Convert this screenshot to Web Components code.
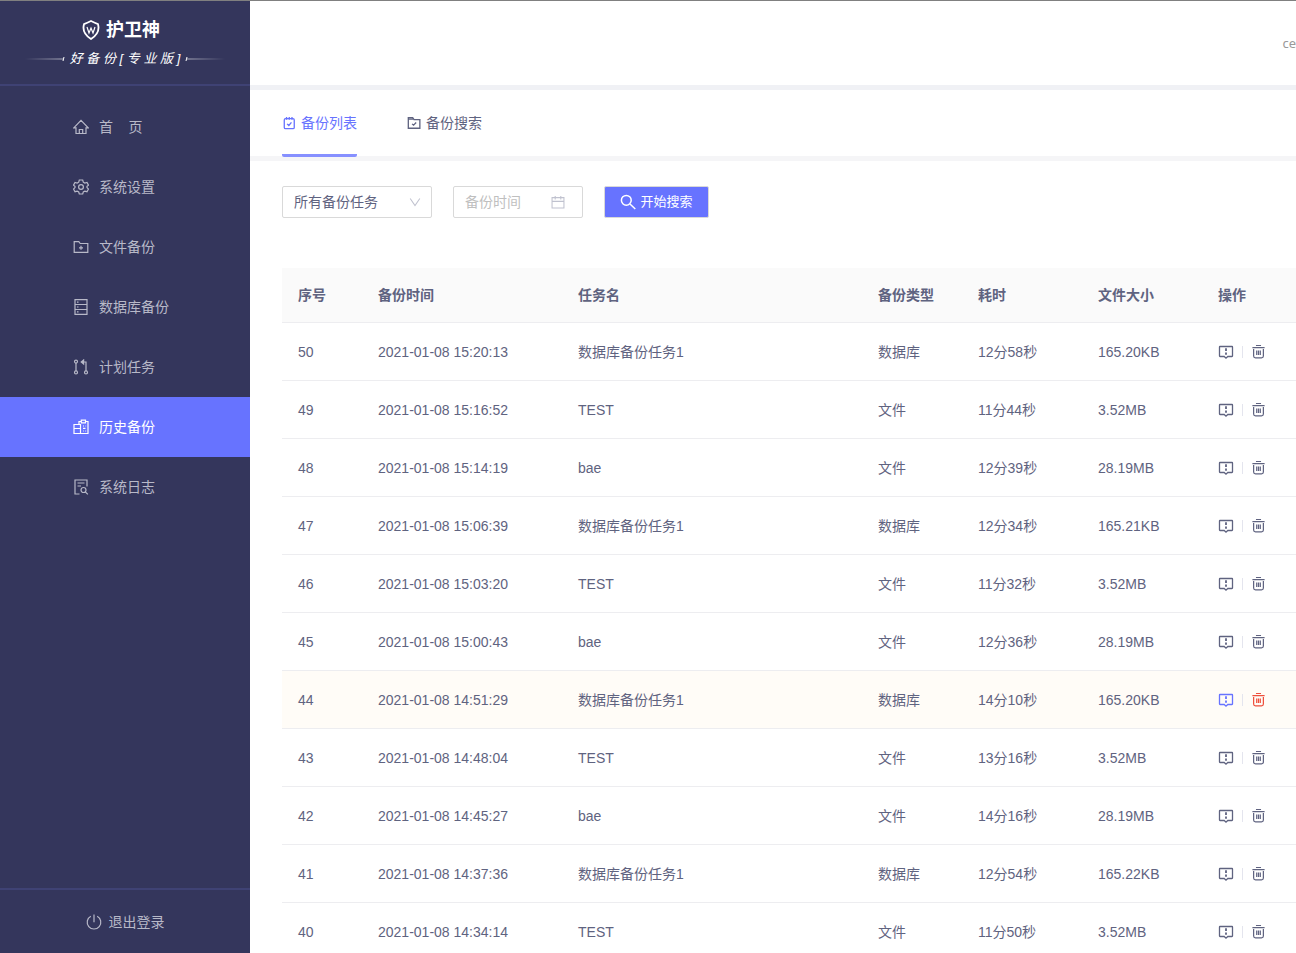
<!DOCTYPE html>
<html lang="zh-CN">
<head>
<meta charset="utf-8">
<title>护卫神·好备份</title>
<style>
  html, body { height: 100%; margin: 0; }
  body { font: 14px/20px "Liberation Sans", "Noto Sans CJK SC", sans-serif; color: #5f6380; background: #fff; overflow: hidden; }
</style>
</head>
<body>
<backup-app></backup-app>

<script>
const ICONS = {
  home: '<path d="M.8 8.800 8 1.400l7.200 7.400H13v5.700H3V8.800zM6.300 14.500v-4h3.400v4"/>',
  gear: '<path d="M6.300 1h3.400l.6 2.200 1.500.9 2.200-.6 1.500 2.700L14 7.400v1.200l1.500 1.400-1.500 2.700-2.200-.6-1.500.9-.6 2H6.300l-.6-2-1.500-.9-2.200.6L.5 10 2 8.600V7.400L.5 6.200 2 3.500l2.200.6 1.500-.9z"/><circle cx="8" cy="8" r="2.400"/>',
  folderPlus: '<path d="M1.200 2.700h4.600L7.200 4.500h7.600v8.800H1.200zM8 6.800v4M6 8.800h4"/>',
  database: '<path d="M2 .7h12v14.600H2zM2 5.500h12M2 10.500h12M4 3.100h1.500M4 8h1.500M4 12.900h1.500"/>',
  plan: '<circle cx="3" cy="2.600" r="1.500"/><circle cx="3" cy="13.400" r="1.500"/><circle cx="13" cy="13.400" r="1.500"/><path d="M3 4.100v7.800M13 11.900V3H8.800M10.600 1v4L8.200 3z"/>',
  history: '<path d="M6 5V2.500h2.300M12.500 2.500H15v12H1V5.500h6.500v9M1 9.500h6.500M8.300 1.200h4.200v2.600H8.300zM10 7h1M12.500 7h.6M10 9.300h2.500M10 12h.8M12.300 12h.8"/>',
  log: '<path d="M6.500 15H2V1h12v6.500M4.500 4h7M4.500 7h3.500"/><circle cx="10.500" cy="11" r="2.500"/><path d="m12.300 12.900 2.500 2.500"/>',
  power: '<path d="M4.800 2.200a6.800 6.800 0 1 0 6.400 0M8 .6v7.600"/>',
  listCheck: '<rect x="2.600" y="3" width="11.400" height="11.500" rx="1.500"/><path d="M5.200 1.200v3.200M8.300 1.200v3.200M11.400 1.200v3.200M5.800 9l2 1.800 3-3.600"/>',
  folderCheck: '<path d="M1.500 1.800h5L8 4.200h6.700V14H1.500zM1.500 3.500H7M5.800 9l1.700 1.500 3-3"/>',
  chevron: '<path d="m2.500 4 5.500 8 5.500-8"/>',
  calendar: '<path d="M1.200 3h13.600v11.800H1.200zM1.200 7.300h13.600M4.800 1v4M11.200 1v4"/>',
  search: '<circle cx="6.300" cy="6.300" r="4.900"/><path d="m10 10 5.300 5"/>',
  note: '<path d="M2 2.500h12q.5 0 .5.500v9q0 .5-.5.500H9.800L8 14.200 6.200 12.500H2q-.5 0-.5-.500V3q0-.5.500-.500z"/><path stroke-width="1.800" d="M8 4.300v2.600M8 8.500v2.200"/>',
  trash: '<path d="M1.500 3.800h13M5.300 1.600h5.400M2.800 5.200v7.600q0 2 2 2h6.400q2 0 2-2V5.200M6.100 7v4.800M8 7v4.800M9.900 7v4.800"/>'
};

function define(name, html, setup) {
  const template = document.createElement('template');
  template.innerHTML = html;
  customElements.define(name, class extends HTMLElement {
    constructor() {
      super();
      this.attachShadow({ mode: 'open' }).append(template.content.cloneNode(true));
    }
    connectedCallback() { if (setup) setup(this, this.shadowRoot); }
  });
}

define('ui-icon', `
<style>
  :host { display: block; flex: none; width: 16px; height: 16px; }
  svg { display: block; width: 100%; height: 100%; fill: none; stroke: currentColor; stroke-width: var(--stroke, 1.2); }
</style>
<svg viewBox="0 0 16 16" aria-hidden="true"></svg>`,
(el, root) => { root.querySelector('svg').innerHTML = ICONS[el.getAttribute('name')] || ''; });

define('brand-logo', `
<style>
  :host { display: flex; flex-direction: column; align-items: center; box-sizing: border-box; height: 85px; padding: 16px 8px 0 0; color: #fff; border-bottom: 2px solid #3f4274; }
  .name { display: flex; align-items: center; gap: 6px; font-size: 18px; line-height: 26px; font-weight: 700; }
  .name svg { width: 18px; height: 20px; }
  .edition { display: flex; align-items: center; gap: 5px; margin-top: 6px; padding-left: 8px; font-size: 13px; line-height: 20px; font-style: italic; white-space: nowrap; }
  .edition svg { width: 40px; height: 8px; }
</style>
<div class="name">
  <svg viewBox="0 0 18 20" fill="none" stroke="#fff" aria-hidden="true"><path stroke-width="1.800" d="M9 1Q13 3 16 4.200 18.500 13 9 19-.5 13 2 4.200 5 3 9 1z"/><path stroke-width="1.200" d="m5 7 2 6 2-5 2 5 2-6"/></svg>
  <span>护卫神</span>
</div>
<div class="edition">
  <svg viewBox="0 0 40 8" aria-hidden="true"><defs><linearGradient id="l"><stop stop-color="#fff" stop-opacity="0"/><stop offset="1" stop-color="#fff" stop-opacity=".6"/></linearGradient></defs><path fill="url(#l)" d="M0 3.500h38v1H0z"/><path stroke="#fff" d="m39 2-1 4"/></svg>
  <span>好 备 份 [ 专 业 版 ]</span>
  <svg viewBox="0 0 40 8" aria-hidden="true"><defs><linearGradient id="r"><stop stop-color="#fff" stop-opacity=".6"/><stop offset="1" stop-color="#fff" stop-opacity="0"/></linearGradient></defs><path fill="url(#r)" d="M2 3.500h38v1H2z"/><path stroke="#fff" d="m2 2-1 4"/></svg>
</div>`);

define('nav-item', `
<style>
  :host { display: block; color: #b8b9c8; }
  :host([active]) { color: #fff; background: #6773ff; }
  a { display: flex; align-items: center; gap: 10px; height: 60px; padding-left: 73px; color: inherit; text-decoration: none; }
</style>
<a href="#"><span><slot></slot></span></a>`,
(el, root) => {
  const link = root.querySelector('a');
  const icon = document.createElement('ui-icon');
  icon.setAttribute('name', el.getAttribute('icon'));
  link.prepend(icon);
  if (el.hasAttribute('active')) link.setAttribute('aria-current', 'page');
});

define('side-bar', `
<style>
  :host { display: flex; flex-direction: column; background: #34365c; }
  nav { flex: 1; padding-top: 11px; }
  footer { border-top: 2px solid #3f4274; }
  footer a { display: flex; align-items: center; justify-content: center; gap: 7px; height: 63px; color: #b8b9c8; text-decoration: none; }
</style>
<brand-logo></brand-logo>
<nav>
  <nav-item icon="home">首&nbsp;&nbsp;&nbsp;&nbsp;页</nav-item>
  <nav-item icon="gear">系统设置</nav-item>
  <nav-item icon="folderPlus">文件备份</nav-item>
  <nav-item icon="database">数据库备份</nav-item>
  <nav-item icon="plan">计划任务</nav-item>
  <nav-item icon="history" active>历史备份</nav-item>
  <nav-item icon="log">系统日志</nav-item>
</nav>
<footer><a href="#"><ui-icon name="power"></ui-icon><span>退出登录</span></a></footer>`);

define('top-bar', `
<style>
  :host { display: flex; align-items: center; justify-content: flex-end; height: 84px; border-bottom: 5px solid #f0f1f5; }
  span { font-family: "Noto Sans", sans-serif; font-size: 13px; color: #999; white-space: nowrap; }
</style>
<span>ce</span>`);

define('tab-bar', `
<style>
  :host { display: flex; gap: 50px; height: 66px; padding-left: 32px; border-bottom: 5px solid #f5f5f7; }
  button { display: flex; align-items: center; gap: 5px; box-sizing: border-box; height: 67px; padding: 2px 0 0; font: inherit; color: inherit; background: none; border: 0; border-bottom: 3px solid transparent; border-radius: 2px; }
  button[aria-selected=true] { color: #6773ff; border-bottom-color: #8690ff; }
  ui-icon { width: 14px; height: 14px; --stroke: 1.5; }
</style>
<button role="tab" aria-selected="true"><ui-icon name="listCheck"></ui-icon>备份列表</button>
<button role="tab" aria-selected="false"><ui-icon name="folderCheck"></ui-icon>备份搜索</button>`);

define('filter-bar', `
<style>
  :host { display: flex; gap: 21px; padding: 25px 32px 50px; }
  .field { display: grid; grid-template-columns: 1fr auto; align-items: center; box-sizing: border-box; height: 32px; padding-right: 9px; border: 1px solid #d9d9d9; border-radius: 2px; color: #c0c2cf; }
  .task { width: 150px; }
  .date { width: 130px; padding-right: 17px; }
  select, input { grid-area: 1 / 1; width: 100%; min-width: 0; height: 30px; box-sizing: border-box; padding: 0 0 0 11px; border: 0; outline: 0; background: none; appearance: none; font: inherit; color: #5f6380; }
  .task select { grid-column: 1 / 3; }
  .field ui-icon { grid-area: 1 / 2; width: 14px; height: 14px; pointer-events: none; }
  input::placeholder { color: #bfbfbf; opacity: 1; }
  button { display: flex; align-items: center; justify-content: center; gap: 4px; box-sizing: border-box; width: 105px; height: 32px; padding: 0; border: 1px solid #d9d9d9; border-radius: 2px; background: #6773ff; color: #fff; font: inherit; font-size: 13px; }
  button ui-icon { --stroke: 1.5; }
</style>
<div class="field task"><select aria-label="备份任务"><option>所有备份任务</option></select><ui-icon name="chevron"></ui-icon></div>
<div class="field date"><input aria-label="备份时间" placeholder="备份时间"><ui-icon name="calendar"></ui-icon></div>
<button><ui-icon name="search"></ui-icon>开始搜索</button>`);

define('row-actions', `
<style>
  :host { display: flex; align-items: center; gap: 8px; }
  button { padding: 0; border: 0; background: none; color: inherit; }
  ui-icon { width: 16px; height: 16px; --stroke: 1.3; }
  i { width: 1px; height: 12px; background: #e4e5ee; }
  ui-icon[name=trash] { width: 15px; height: 15px; }
  :host([highlight]) .info { color: #6773ff; }
  :host([highlight]) .delete { color: #ee4f3c; }
</style>
<button class="info" aria-label="详情"><ui-icon name="note"></ui-icon></button><i></i><button class="delete" aria-label="删除"><ui-icon name="trash"></ui-icon></button>`);

const RECORDS = [
  [50, '15:20:13', 'db', '12分58秒', '165.20KB'],
  [49, '15:16:52', 'TEST', '11分44秒', '3.52MB'],
  [48, '15:14:19', 'bae', '12分39秒', '28.19MB'],
  [47, '15:06:39', 'db', '12分34秒', '165.21KB'],
  [46, '15:03:20', 'TEST', '11分32秒', '3.52MB'],
  [45, '15:00:43', 'bae', '12分36秒', '28.19MB'],
  [44, '14:51:29', 'db', '14分10秒', '165.20KB'],
  [43, '14:48:04', 'TEST', '13分16秒', '3.52MB'],
  [42, '14:45:27', 'bae', '14分16秒', '28.19MB'],
  [41, '14:37:36', 'db', '12分54秒', '165.22KB'],
  [40, '14:34:14', 'TEST', '11分50秒', '3.52MB']
];

define('backup-table', `
<style>
  :host { display: block; padding-left: 32px; }
  table { width: 100%; min-width: 1060px; table-layout: fixed; border-collapse: separate; border-spacing: 0; }
  th, td { box-sizing: border-box; padding: 0 16px; text-align: left; border-bottom: 1px solid #ededf0; white-space: nowrap; }
  th { height: 55px; font-weight: 700; background: #fafafa; }
  td { height: 58px; }
  tr.hover td { background: #fffcf7; }
</style>
<table>
  <colgroup><col style="width:80px"><col style="width:200px"><col style="width:300px"><col style="width:100px"><col style="width:120px"><col style="width:120px"><col></colgroup>
  <thead><tr><th>序号</th><th>备份时间</th><th>任务名</th><th>备份类型</th><th>耗时</th><th>文件大小</th><th>操作</th></tr></thead>
  <tbody></tbody>
</table>`,
(el, root) => {
  root.querySelector('tbody').innerHTML = RECORDS.map(([id, time, task, spent, size]) => {
    const db = task === 'db', hover = id === 44;
    return `<tr${hover ? ' class="hover"' : ''}><td>${id}</td><td>2021-01-08 ${time}</td><td>${db ? '数据库备份任务1' : task}</td><td>${db ? '数据库' : '文件'}</td><td>${spent}</td><td>${size}</td><td><row-actions${hover ? ' highlight' : ''}></row-actions></td></tr>`;
  }).join('');
});

define('backup-app', `
<style>
  :host { display: grid; grid-template-columns: 250px minmax(0, 1fr); grid-template-rows: minmax(0, 1fr); box-sizing: border-box; height: 100vh; border-top: 1px solid #808080; }
  main { overflow: auto; scrollbar-width: none; }
</style>
<side-bar></side-bar>
<main><top-bar></top-bar><tab-bar role="tablist"></tab-bar><filter-bar></filter-bar><backup-table></backup-table></main>`);
</script>
</body>
</html>
